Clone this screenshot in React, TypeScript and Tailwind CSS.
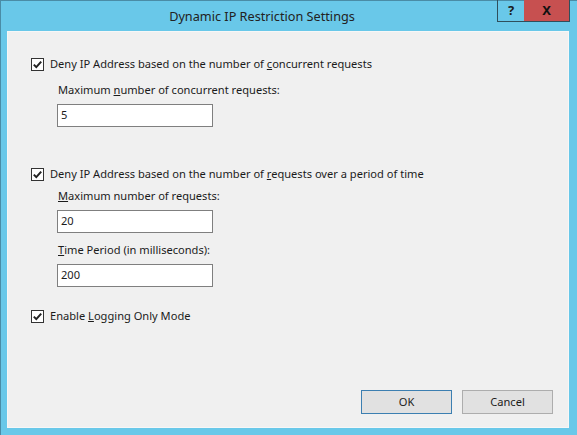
const font = { fontFamily: '"Noto Sans", "Open Sans", sans-serif' };

function Check() {
  return (
    <span className="flex h-[13px] w-[13px] shrink-0 items-center justify-center border border-[#333333] bg-white">
      <svg width="11" height="11" viewBox="0 0 11 11">
        <path d="M1.8 5.6 L4.3 8.1 L9.2 2.6" fill="none" stroke="#222222" strokeWidth="2" />
      </svg>
    </span>
  );
}

function CheckRow({ children, className }: { children: React.ReactNode; className: string }) {
  return (
    <div className={"flex h-[16px] items-center gap-[6px] " + className}>
      <Check />
      <span>{children}</span>
    </div>
  );
}

function Field({ label, value, className }: { label: React.ReactNode; value: string; className: string }) {
  return (
    <div className={"ml-[26px] flex flex-col " + className}>
      <div className="ml-[1px] h-[16px] leading-[16px]">{label}</div>
      <div className="mt-[6px] flex h-[23px] w-[156px] items-center border border-[#7f7f7f] bg-white px-[3px]">
        {value}
      </div>
    </div>
  );
}

export default function App() {
  return (
    <div
      className="flex h-[435px] w-[577px] flex-col border-t border-l border-[#4a8ca6] bg-[#69c8e9] text-[11.1px] text-[#1b1b1b]"
      style={font}
    >
      <div className="flex h-[30px] items-start pr-[7px]">
        <div className="flex-1 pl-[26px] pt-[5px] text-center text-[12.7px] leading-[20px] text-[#222222]">
          Dynamic IP Restriction Settings
        </div>
        <div className="-mt-px flex h-[22px] w-[27px] items-center justify-center border-b border-l border-[#2f4f5c] text-[13px] font-bold">
          ?
        </div>
        <div className="-mt-px flex h-[22px] w-[46px] items-center justify-center border-b border-r border-[#2f4f5c] bg-[#c75050] text-[13px] font-bold text-[#111111]">
          X
        </div>
      </div>
      <div className="mx-[6px] mb-[7px] mr-[8px] flex flex-1 flex-col border border-[#f7f7f7] bg-[#f0f0f0] pl-[23px] pr-[15px]">
        <CheckRow className="mt-[24px]">
          Deny IP Address based on the number of <u>c</u>oncurrent requests
        </CheckRow>
        <Field
          className="mt-[10px]"
          label={
            <>
              Maximum <u>n</u>umber of concurrent requests:
            </>
          }
          value="5"
        />
        <CheckRow className="mt-[39px]">
          Deny IP Address based on the number of <u>r</u>equests over a period of time
        </CheckRow>
        <Field
          className="mt-[6px]"
          label={
            <>
              <u>M</u>aximum number of requests:
            </>
          }
          value="20"
        />
        <Field
          className="mt-[9px]"
          label={
            <>
              <u>T</u>ime Period (in milliseconds):
            </>
          }
          value="200"
        />
        <CheckRow className="mt-[21px]">
          Enable <u>L</u>ogging Only Mode
        </CheckRow>
        <div className="mt-auto mb-[13px] flex justify-end gap-[10px]">
          <button className="h-[24px] w-[91px] border border-[#3c7fb1] bg-[#e1e1e1]">OK</button>
          <button className="h-[24px] w-[91px] border border-[#adadad] bg-[#e1e1e1]">Cancel</button>
        </div>
      </div>
    </div>
  );
}
